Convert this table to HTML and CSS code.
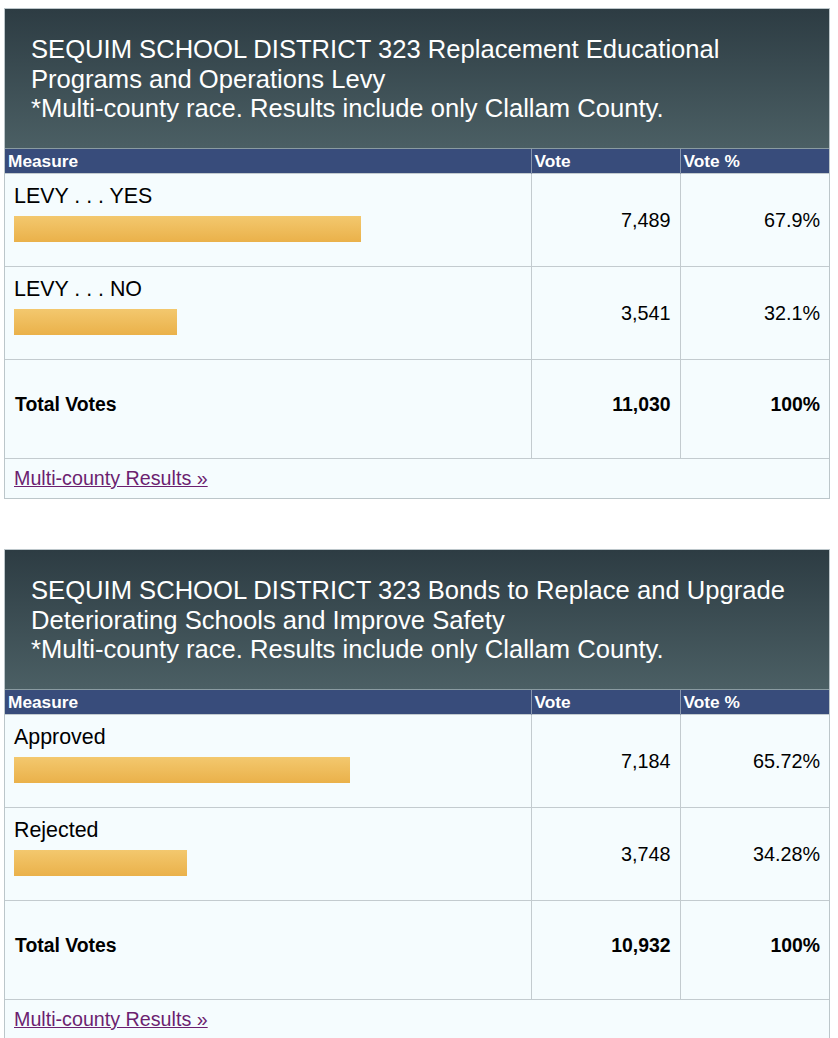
FILE: index.html
```html
<!DOCTYPE html>
<html>
<head>
<meta charset="utf-8">
<link rel="stylesheet" href="styles.css">
</head>
<body>
<div class="race">
  <div class="race-head">SEQUIM SCHOOL DISTRICT 323 Replacement Educational Programs and Operations Levy<br>*Multi-county race. Results include only Clallam County.</div>
  <table class="results">
    <colgroup><col class="c-measure"><col class="c-vote"><col class="c-pct"></colgroup>
    <thead>
      <tr><th>Measure</th><th>Vote</th><th>Vote %</th></tr>
    </thead>
    <tbody>
      <tr class="choice">
        <td class="name"><div class="label">LEVY . . . YES</div><div class="bar" style="width:347px"></div></td>
        <td class="num">7,489</td><td class="num">67.9%</td>
      </tr>
      <tr class="choice">
        <td class="name"><div class="label">LEVY . . . NO</div><div class="bar" style="width:163px"></div></td>
        <td class="num">3,541</td><td class="num">32.1%</td>
      </tr>
      <tr class="total">
        <td class="name">Total Votes</td><td class="num">11,030</td><td class="num">100%</td>
      </tr>
      <tr class="more"><td colspan="3"><a href="#" class="link">Multi-county Results »</a></td></tr>
    </tbody>
  </table>
</div>

<div class="race">
  <div class="race-head">SEQUIM SCHOOL DISTRICT 323 Bonds to Replace and Upgrade Deteriorating Schools and Improve Safety<br>*Multi-county race. Results include only Clallam County.</div>
  <table class="results">
    <colgroup><col class="c-measure"><col class="c-vote"><col class="c-pct"></colgroup>
    <thead>
      <tr><th>Measure</th><th>Vote</th><th>Vote %</th></tr>
    </thead>
    <tbody>
      <tr class="choice">
        <td class="name"><div class="label">Approved</div><div class="bar" style="width:336px"></div></td>
        <td class="num">7,184</td><td class="num">65.72%</td>
      </tr>
      <tr class="choice">
        <td class="name"><div class="label">Rejected</div><div class="bar" style="width:173px"></div></td>
        <td class="num">3,748</td><td class="num">34.28%</td>
      </tr>
      <tr class="total">
        <td class="name">Total Votes</td><td class="num">10,932</td><td class="num">100%</td>
      </tr>
      <tr class="more"><td colspan="3"><a href="#" class="link">Multi-county Results »</a></td></tr>
    </tbody>
  </table>
</div>
</body>
</html>
```

FILE: styles.css
```css
html, body {
  margin: 0;
  padding: 0;
  background: #ffffff;
}
body {
  font-family: "Liberation Sans", Arial, sans-serif;
  color: #000;
}
.race {
  width: 824px;
  margin: 8px 0 50px 4px;
  border: 1px solid #bcc6ca;
  background: #f5fcfe;
}
.race-head {
  background: linear-gradient(to bottom, #2d3c43 0%, #4b5f64 100%);
  color: #ffffff;
  font-size: 25.6px;
  line-height: 29.6px;
  padding: 26px 26px 24px 26px;
  height: 89px;
  border-bottom: 1px solid #8a9ba1;
}
.results {
  width: 824px;
  border-collapse: collapse;
  table-layout: fixed;
}
.c-measure { width: 526px; }
.c-vote { width: 149px; }
.c-pct { width: 149px; }
.results th {
  background: #384c7b;
  color: #fff;
  font-size: 17.3px;
  font-weight: bold;
  text-align: left;
  height: 24px;
  padding: 0 3px;
  line-height: 24px;
  border-left: 1px solid #8795ad;
}
.results th:first-child { border-left: none; }
.results td {
  border-top: 1px solid #c3cbcf;
  border-left: 1px solid #c3cbcf;
  padding: 0;
}
.results td:first-child { border-left: none; }
.choice td { height: 82px; }
.choice .name {
  vertical-align: top;
  padding: 10px 9px 0 9px;
}
.label {
  font-size: 21.4px;
  line-height: 25px;
}
.bar {
  height: 26px;
  margin-top: 7px;
  background: linear-gradient(to bottom, #f3c86e 0%, #eab14a 100%);
}
.num {
  text-align: right;
  vertical-align: middle;
  font-size: 19.8px;
  padding-right: 9px !important;
}
.total td {
  height: 88px;
  padding-bottom: 10px;
  font-weight: bold;
  font-size: 19.4px;
  vertical-align: middle;
}
.total .name {
  padding-left: 10px;
}
.more td {
  height: 39px;
  padding-left: 9px;
  vertical-align: middle;
}
.link {
  color: #6c1f70;
  font-size: 19.7px;
  text-decoration: underline;
}
```
